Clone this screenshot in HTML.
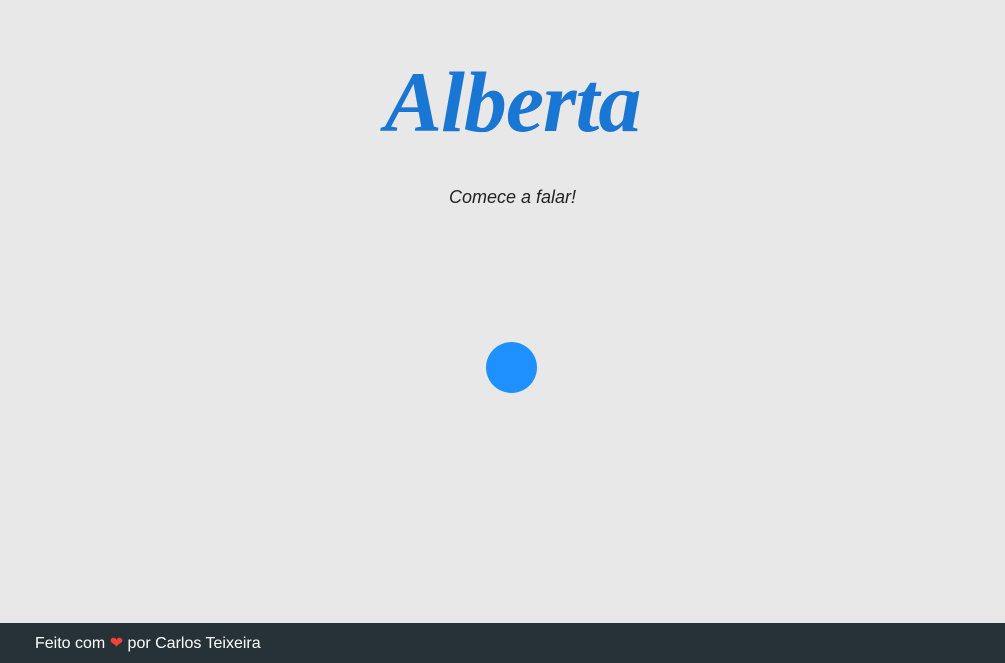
<!DOCTYPE html>
<html><head><meta charset="utf-8"><style>
html,body{margin:0;padding:0;}
body{width:1005px;height:643px;background:#e8e8e8;position:relative;overflow:hidden;font-family:"Liberation Sans",sans-serif;}
h1{position:absolute;left:20px;right:0;top:52px;margin:0;text-align:center;font-family:"Liberation Serif",cursive;font-style:italic;font-weight:bold;font-size:86px;line-height:100px;color:#1976d2;letter-spacing:-1px;}
.sub{position:absolute;left:20px;right:0;top:187px;text-align:center;font-style:italic;font-size:18px;color:#222;}
.dot{position:absolute;left:486px;top:342px;width:51px;height:51px;border-radius:50%;background:#1e90ff;}
footer{position:absolute;left:0;top:623px;width:1005px;height:40px;background:#263238;color:#fff;font-size:16px;}
footer span{position:absolute;left:35px;top:10px;}
</style></head><body>
<h1>Alberta</h1>
<div class="sub">Comece a falar!</div>
<div class="dot"></div>
<footer><span>Feito com <span style="position:static;color:#f44336">❤</span> por Carlos Teixeira</span></footer>
</body></html>
